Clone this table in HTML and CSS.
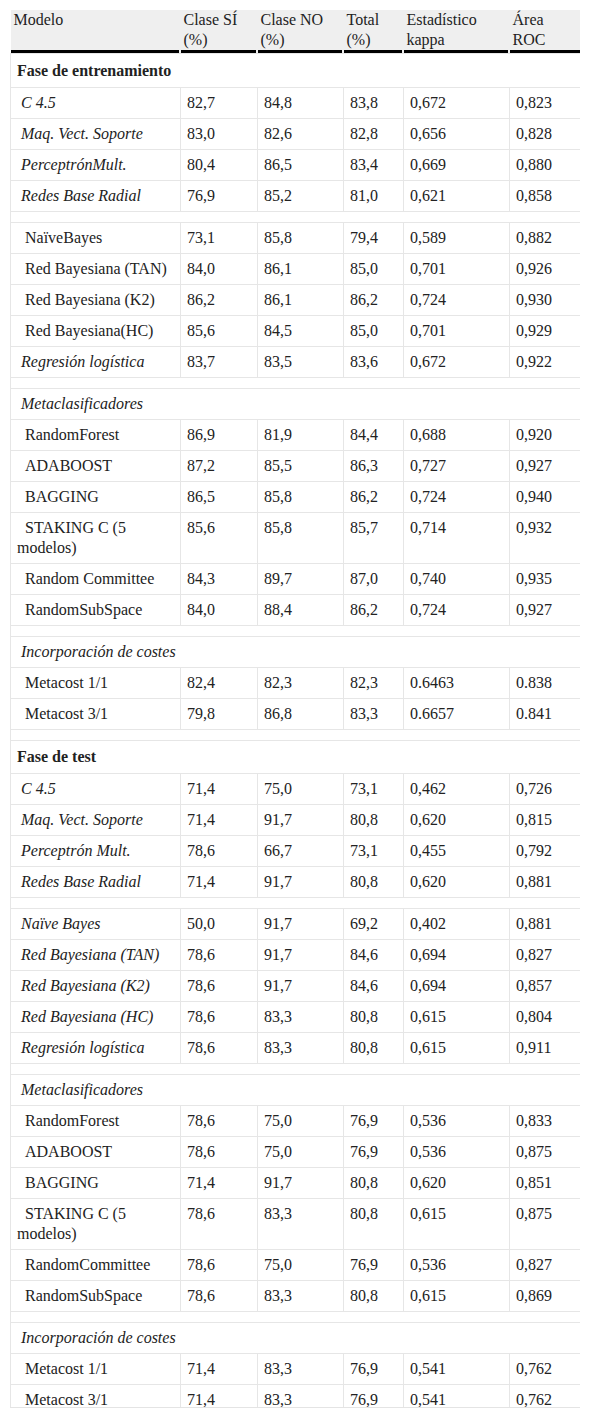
FILE: index.html
```html
<!DOCTYPE html>
<html lang="es">
<head>
<meta charset="utf-8">
<title>Tabla</title>
<link rel="stylesheet" href="styles.css">
</head>
<body>
<div class="wrap">
<table class="data">
<colgroup>
<col class="c1"><col class="c2"><col class="c3"><col class="c4"><col class="c5"><col class="c6">
</colgroup>
<thead>
<tr><th>Modelo</th><th>Clase SÍ (%)</th><th>Clase NO (%)</th><th>Total (%)</th><th>Estadístico kappa</th><th>Área ROC</th></tr>
</thead>
<tbody>
<tr class="phase first"><td colspan="6">Fase de entrenamiento</td></tr>
<tr><td class="it">&nbsp;C 4.5</td><td>82,7</td><td>84,8</td><td>83,8</td><td>0,672</td><td>0,823</td></tr>
<tr><td class="it">&nbsp;Maq. Vect. Soporte</td><td>83,0</td><td>82,6</td><td>82,8</td><td>0,656</td><td>0,828</td></tr>
<tr><td class="it">&nbsp;PerceptrónMult.</td><td>80,4</td><td>86,5</td><td>83,4</td><td>0,669</td><td>0,880</td></tr>
<tr><td class="it">&nbsp;Redes Base Radial</td><td>76,9</td><td>85,2</td><td>81,0</td><td>0,621</td><td>0,858</td></tr>
<tr class="gap"><td colspan="6"></td></tr>
<tr><td>&nbsp;&nbsp;NaïveBayes</td><td>73,1</td><td>85,8</td><td>79,4</td><td>0,589</td><td>0,882</td></tr>
<tr><td>&nbsp;&nbsp;Red Bayesiana (TAN)</td><td>84,0</td><td>86,1</td><td>85,0</td><td>0,701</td><td>0,926</td></tr>
<tr><td>&nbsp;&nbsp;Red Bayesiana (K2)</td><td>86,2</td><td>86,1</td><td>86,2</td><td>0,724</td><td>0,930</td></tr>
<tr><td>&nbsp;&nbsp;Red Bayesiana(HC)</td><td>85,6</td><td>84,5</td><td>85,0</td><td>0,701</td><td>0,929</td></tr>
<tr><td class="it">&nbsp;Regresión logística</td><td>83,7</td><td>83,5</td><td>83,6</td><td>0,672</td><td>0,922</td></tr>
<tr class="gap"><td colspan="6"></td></tr>
<tr class="group"><td colspan="6">&nbsp;Metaclasificadores</td></tr>
<tr><td>&nbsp;&nbsp;RandomForest</td><td>86,9</td><td>81,9</td><td>84,4</td><td>0,688</td><td>0,920</td></tr>
<tr><td>&nbsp;&nbsp;ADABOOST</td><td>87,2</td><td>85,5</td><td>86,3</td><td>0,727</td><td>0,927</td></tr>
<tr><td>&nbsp;&nbsp;BAGGING</td><td>86,5</td><td>85,8</td><td>86,2</td><td>0,724</td><td>0,940</td></tr>
<tr><td>&nbsp;&nbsp;STAKING C (5 modelos)</td><td>85,6</td><td>85,8</td><td>85,7</td><td>0,714</td><td>0,932</td></tr>
<tr><td>&nbsp;&nbsp;Random Committee</td><td>84,3</td><td>89,7</td><td>87,0</td><td>0,740</td><td>0,935</td></tr>
<tr><td>&nbsp;&nbsp;RandomSubSpace</td><td>84,0</td><td>88,4</td><td>86,2</td><td>0,724</td><td>0,927</td></tr>
<tr class="gap"><td colspan="6"></td></tr>
<tr class="group"><td colspan="6">&nbsp;Incorporación de costes</td></tr>
<tr><td>&nbsp;&nbsp;Metacost 1/1</td><td>82,4</td><td>82,3</td><td>82,3</td><td>0.6463</td><td>0.838</td></tr>
<tr><td>&nbsp;&nbsp;Metacost 3/1</td><td>79,8</td><td>86,8</td><td>83,3</td><td>0.6657</td><td>0.841</td></tr>
<tr class="gap"><td colspan="6"></td></tr>
<tr class="phase"><td colspan="6">Fase de test</td></tr>
<tr><td class="it">&nbsp;C 4.5</td><td>71,4</td><td>75,0</td><td>73,1</td><td>0,462</td><td>0,726</td></tr>
<tr><td class="it">&nbsp;Maq. Vect. Soporte</td><td>71,4</td><td>91,7</td><td>80,8</td><td>0,620</td><td>0,815</td></tr>
<tr><td class="it">&nbsp;Perceptrón Mult.</td><td>78,6</td><td>66,7</td><td>73,1</td><td>0,455</td><td>0,792</td></tr>
<tr><td class="it">&nbsp;Redes Base Radial</td><td>71,4</td><td>91,7</td><td>80,8</td><td>0,620</td><td>0,881</td></tr>
<tr class="gap"><td colspan="6"></td></tr>
<tr><td class="it">&nbsp;Naïve Bayes</td><td>50,0</td><td>91,7</td><td>69,2</td><td>0,402</td><td>0,881</td></tr>
<tr><td class="it">&nbsp;Red Bayesiana (TAN)</td><td>78,6</td><td>91,7</td><td>84,6</td><td>0,694</td><td>0,827</td></tr>
<tr><td class="it">&nbsp;Red Bayesiana (K2)</td><td>78,6</td><td>91,7</td><td>84,6</td><td>0,694</td><td>0,857</td></tr>
<tr><td class="it">&nbsp;Red Bayesiana (HC)</td><td>78,6</td><td>83,3</td><td>80,8</td><td>0,615</td><td>0,804</td></tr>
<tr><td class="it">&nbsp;Regresión logística</td><td>78,6</td><td>83,3</td><td>80,8</td><td>0,615</td><td>0,911</td></tr>
<tr class="gap"><td colspan="6"></td></tr>
<tr class="group"><td colspan="6">&nbsp;Metaclasificadores</td></tr>
<tr><td>&nbsp;&nbsp;RandomForest</td><td>78,6</td><td>75,0</td><td>76,9</td><td>0,536</td><td>0,833</td></tr>
<tr><td>&nbsp;&nbsp;ADABOOST</td><td>78,6</td><td>75,0</td><td>76,9</td><td>0,536</td><td>0,875</td></tr>
<tr><td>&nbsp;&nbsp;BAGGING</td><td>71,4</td><td>91,7</td><td>80,8</td><td>0,620</td><td>0,851</td></tr>
<tr><td>&nbsp;&nbsp;STAKING C (5 modelos)</td><td>78,6</td><td>83,3</td><td>80,8</td><td>0,615</td><td>0,875</td></tr>
<tr><td>&nbsp;&nbsp;RandomCommittee</td><td>78,6</td><td>75,0</td><td>76,9</td><td>0,536</td><td>0,827</td></tr>
<tr><td>&nbsp;&nbsp;RandomSubSpace</td><td>78,6</td><td>83,3</td><td>80,8</td><td>0,615</td><td>0,869</td></tr>
<tr class="gap"><td colspan="6"></td></tr>
<tr class="group"><td colspan="6">&nbsp;Incorporación de costes</td></tr>
<tr><td>&nbsp;&nbsp;Metacost 1/1</td><td>71,4</td><td>83,3</td><td>76,9</td><td>0,541</td><td>0,762</td></tr>
<tr><td>&nbsp;&nbsp;Metacost 3/1</td><td>71,4</td><td>83,3</td><td>76,9</td><td>0,541</td><td>0,762</td></tr>
</tbody>
</table>
</div>
</body>
</html>
```

FILE: styles.css
```css
html, body {
  margin: 0;
  padding: 0;
  background: #fff;
}
body {
  padding: 10px 10px 0 10px;
  font-family: "Liberation Serif", "Times New Roman", "DejaVu Serif", serif;
  font-size: 16px;
  line-height: 20px;
  color: #222;
}
.wrap {
  width: 570px;
  height: 1397px;
  overflow: hidden;
  border-bottom: 1px solid #e4e4e4;
}
.data {
  width: 570px;
  table-layout: fixed;
  border-collapse: collapse;
}
.c1 { width: 170px; }
.c2 { width: 77px; }
.c3 { width: 86px; }
.c4 { width: 60px; }
.c5 { width: 106px; }
.c6 { width: 71px; }
.data th {
  font-weight: normal;
  text-align: left;
  vertical-align: top;
  padding: 0 6px 3px 3px;
  height: 43px;
  box-sizing: border-box;
  background:
    linear-gradient(#000, #000) no-repeat left bottom / calc(100% - 2px) 3px,
    #efefef;
  color: #222;
}
.data th:last-child {
  background:
    linear-gradient(#000, #000) no-repeat left bottom / 100% 3px,
    #efefef;
}
.data td {
  border: 1px solid #e6e6e6;
  padding: 5px 5px 5px 6px;
  vertical-align: top;
  text-align: left;
}
.data td.it,
.data tr.group td {
  font-style: italic;
}
.data tr.phase td {
  font-weight: bold;
  padding: 6px 6px;
}
.data tr.phase.first td {
  padding-top: 7px;
}
.data tr.gap td {
  height: 10px;
  padding: 0;
}
```
